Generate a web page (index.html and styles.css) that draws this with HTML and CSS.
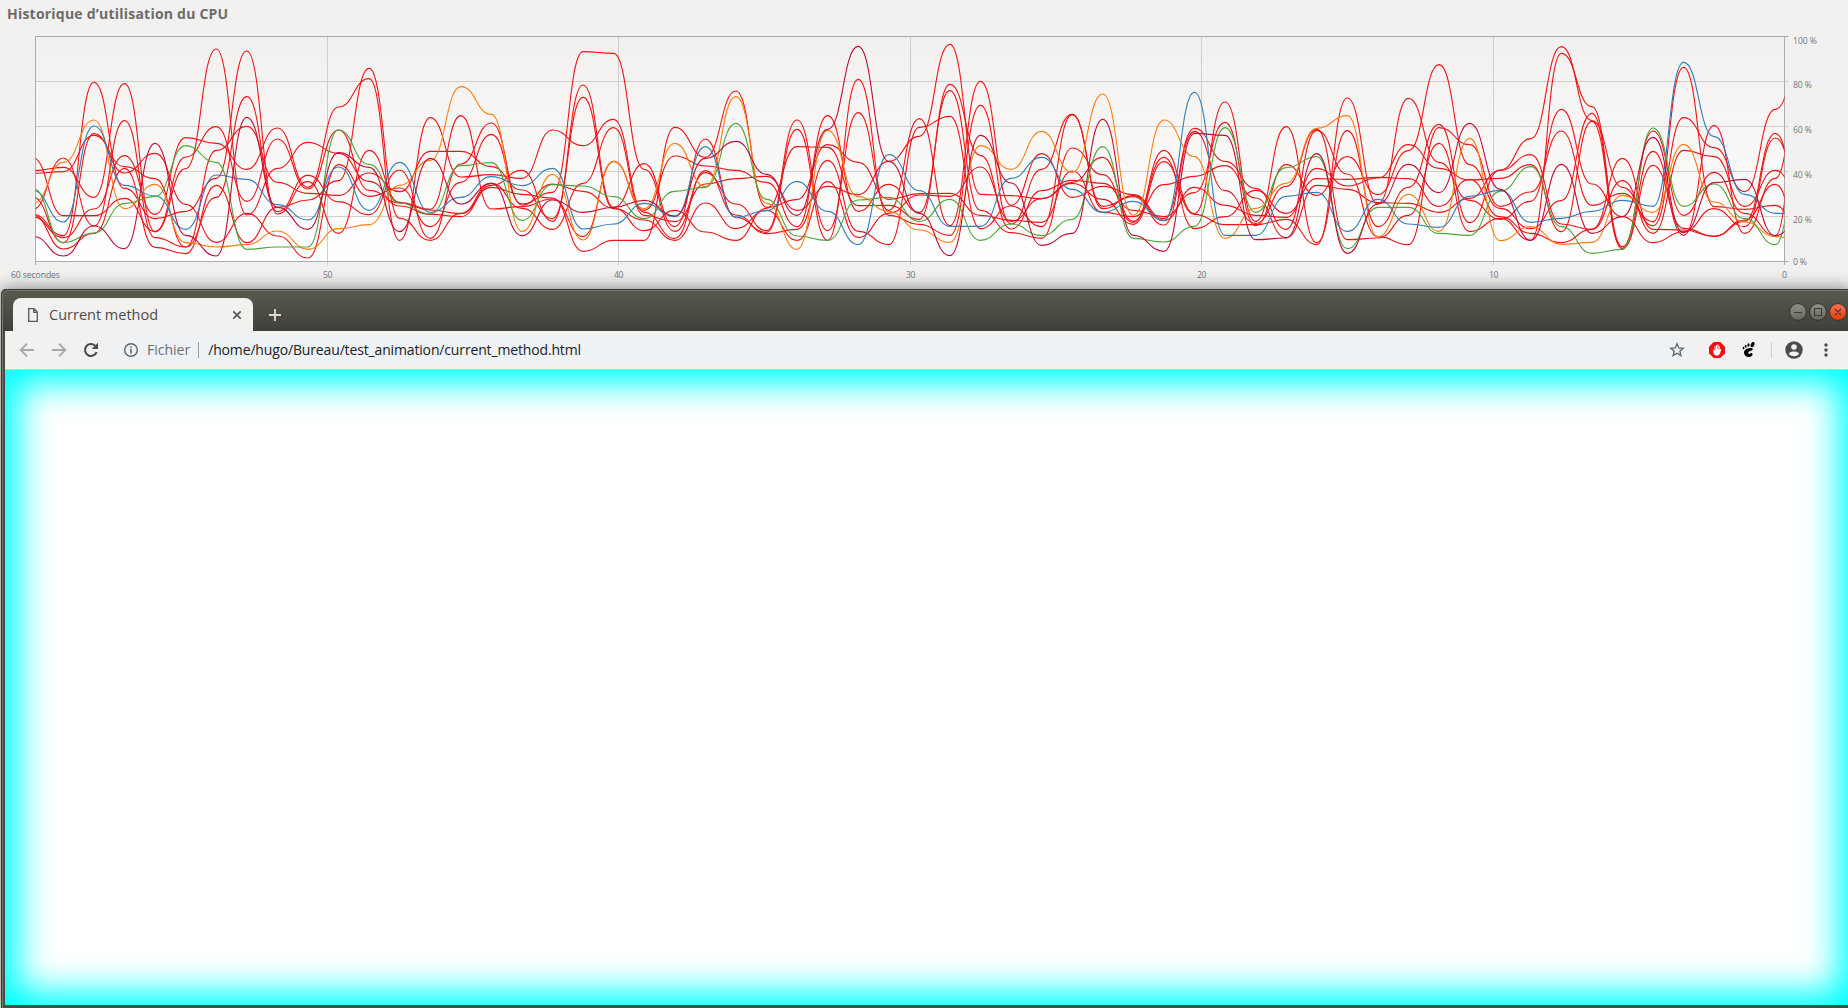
FILE: index.html
```html
<!DOCTYPE html>
<html lang="fr">
<head>
<meta charset="utf-8">
<title>Current method</title>
<link rel="stylesheet" href="styles.css">
</head>
<body>
<section class="monitor">
  <h1 class="monitor-title"><span>Historique d’utilisation du CPU</span></h1>
  <svg class="chart" viewBox="0 28 1848 261" width="1848" height="261">
    <defs>
      <linearGradient id="plot" x1="0" y1="0" x2="0" y2="1"><stop offset="0" stop-color="#f1f0ee"/><stop offset="1" stop-color="#ffffff"/></linearGradient>
      <clipPath id="clip"><rect x="35.5" y="36" width="1749" height="226"/></clipPath>
    </defs>
    <rect x="35.5" y="36.5" width="1749" height="225" fill="url(#plot)"/>
    <path class="grid" d="M35 81.5H1788.5M35 126.5H1788.5M35 171.5H1788.5M35 216.5H1788.5M327.5 37V265M618.5 37V265M910.5 37V265M1201.5 37V265M1493.5 37V265"/>
    <path class="axis" d="M35.5 265V36.5H1788.5M35.5 261.5H1788.5M1784.5 37V265"/>
    <g id="curves" clip-path="url(#clip)"></g>
    <g class="labels">
      <text x="11" y="278" textLength="49">60 secondes</text>
      <text x="323" y="278" textLength="9.5">50</text>
      <text x="614" y="278" textLength="9.5">40</text>
      <text x="906" y="278" textLength="9.5">30</text>
      <text x="1197" y="278" textLength="9.5">20</text>
      <text x="1489" y="278" textLength="9.5">10</text>
      <text x="1782" y="278">0</text>
      <text x="1793" y="44" textLength="24">100 %</text>
      <text x="1793" y="88" textLength="19">80 %</text>
      <text x="1793" y="132.5" textLength="19">60 %</text>
      <text x="1793" y="177.5" textLength="19">40 %</text>
      <text x="1793" y="222.5" textLength="19">20 %</text>
      <text x="1793" y="265" textLength="14">0 %</text>
    </g>
  </svg>
</section>
<main class="window">
  <header class="titlebar">
    <div class="tab">
      <svg class="doc" width="12" height="16" viewBox="0 0 12 16"><path d="M1.7 1.7H7L10.3 5V14.3H1.7ZM6.7 1.7V5.3H10.3" fill="none" stroke="#5a5a58" stroke-width="1.3"/></svg>
      <span class="tab-title">Current method</span>
      <svg width="10" height="10" viewBox="0 0 10 10"><path d="M1.3 1.3 8.7 8.7M8.7 1.3 1.3 8.7" stroke="#555" stroke-width="1.7"/></svg>
    </div>
    <svg class="plus" width="12" height="12" viewBox="0 0 12 12"><path d="M6 0V12M0 6H12" stroke="#dfdbd2" stroke-width="1.8"/></svg>
    <div class="controls">
      <svg width="60" height="20" viewBox="0 0 60 20">
        <defs>
          <linearGradient id="grey" x1="0" y1="0" x2="0" y2="1"><stop offset="0" stop-color="#91918a"/><stop offset="1" stop-color="#66665f"/></linearGradient>
          <linearGradient id="red" x1="0" y1="0" x2="0" y2="1"><stop offset="0" stop-color="#ff7455"/><stop offset="1" stop-color="#e73a00"/></linearGradient>
        </defs>
        <g stroke="#34342f" stroke-width="1"><circle cx="10" cy="10" r="8.4" fill="url(#grey)"/><circle cx="30" cy="10" r="8.4" fill="url(#grey)"/><circle cx="50" cy="10" r="8.4" fill="url(#red)"/></g>
        <path d="M6 10.5H14M26.5 6.5H33.5V13.5H26.5ZM47 7 53 13M53 7 47 13" fill="none" stroke="#3c3b37" stroke-width="1.1"/>
      </svg>
    </div>
  </header>
  <nav class="toolbar">
    <svg class="nav-icon" width="16" height="16" viewBox="0 0 16 16"><path d="M15 8H2M8 1.7 1.7 8 8 14.3" fill="none" stroke="#aaa8a6" stroke-width="1.9"/></svg>
    <svg class="nav-icon" width="16" height="16" viewBox="0 0 16 16"><path d="M1 8H14M8 1.7 14.3 8 8 14.3" fill="none" stroke="#aaa8a6" stroke-width="1.9"/></svg>
    <svg class="nav-icon" width="16" height="16" viewBox="0 0 16 16"><path d="M13.6 10.1A6 6 0 1 1 12.2 3.7" fill="none" stroke="#4b4b49" stroke-width="2.1"/><path d="M15 .8V7.1H8.7Z" fill="#4b4b49"/></svg>
    <div class="omnibox">
      <svg width="14" height="14" viewBox="0 0 14 14"><circle cx="7" cy="7" r="6.3" fill="none" stroke="#5f6368" stroke-width="1.4"/><path d="M7 6V10.6M7 3.3V4.8" stroke="#5f6368" stroke-width="1.6"/></svg>
      <span class="scheme">Fichier</span><i class="divider"></i><span class="url">/home/hugo/Bureau/test_animation/current_method.html</span>
      <svg class="star" width="16" height="16" viewBox="0 0 16 16"><path d="M8 1.8 9.7 6 14.2 6.3 10.8 9.2 11.9 13.6 8 11.2 4.1 13.6 5.2 9.2 1.8 6.3 6.3 6Z" fill="none" stroke="#5f6368" stroke-width="1.3"/></svg>
    </div>
    <svg class="ext" width="16" height="16" viewBox="0 0 16 16"><path d="M4.7 0H11.3L16 4.7V11.3L11.3 16H4.7L0 11.3V4.7Z" fill="#f40d12"/><path d="M4.3 7V10.5Q5 13.5 8 13.8Q10.5 13.5 11.3 10.8L12.2 7.2 11.3 6.8 10.7 8.4V4H9.8V7.3H9.4V2.6H8.4V7.3H8V3H7V7.5H6.5V4.3H5.5V9Z" fill="#fff"/></svg>
    <svg class="foot" width="14" height="16" viewBox="0 0 14 16"><ellipse cx="10.6" cy="2.6" rx="1.7" ry="2.8" transform="rotate(28 10.6 2.6)"/><ellipse cx="6.5" cy="3" rx="1.1" ry="1.7"/><ellipse cx="3.7" cy="4.3" rx=".95" ry="1.5"/><ellipse cx="1.5" cy="6.1" rx=".85" ry="1.3"/><path d="M9.7 6C5 5.7 1.5 8 2 11.3 2.4 14 5 15.3 7.6 14.9 10.5 14.4 11.3 12.2 10 11.2 8.8 10.4 8 12.3 6.8 11.8 5.4 11 6.5 9.3 8.4 9 10.4 8.6 12 6.6 9.7 6Z"/></svg>
    <i class="bar"></i>
    <svg class="avatar" width="18" height="18" viewBox="0 0 18 18"><circle cx="9" cy="9" r="8.7" fill="#4b4b4d"/><circle cx="9" cy="6" r="2.8" fill="#f2f1f0"/><path d="M3.8 13C4.2 10.9 7 10.4 9 10.4S13.8 10.9 14.2 13Q12.2 15.3 9 15.3T3.8 13Z" fill="#f2f1f0"/></svg>
    <svg class="dots" width="4" height="14" viewBox="0 0 4 14"><g fill="#4b4b49"><circle cx="2" cy="2" r="1.7"/><circle cx="2" cy="7" r="1.7"/><circle cx="2" cy="12" r="1.7"/></g></svg>
  </nav>
  <div class="page"></div>
</main>
<script src="script.js"></script>
</body>
</html>
```
FILE: styles.css
```css
* { box-sizing: border-box; }
body {
  margin: 0;
  width: 1848px;
  height: 1008px;
  overflow: hidden;
  display: flex;
  flex-direction: column;
  background: #f2f1f0;
  font-family: "Open Sans", "Noto Sans", sans-serif;
}
.monitor { height: 289px; flex: none; }
.monitor-title {
  margin: 0;
  height: 28px;
  padding-left: 7px;
  font-size: 14px;
  line-height: 28px;
  font-weight: 700;
  letter-spacing: .22px;
  color: #6d6b69;
  white-space: nowrap;
}
.chart { display: block; }
.grid { stroke: #cfcecd; stroke-width: 1; fill: none; }
.axis { stroke: #adacab; stroke-width: 1; fill: none; }
.curve { fill: none; stroke-width: 1.1; }
.labels { font-size: 8.7px; fill: #74777a; }
.window {
  flex: 1;
  min-height: 0;
  margin-left: 1px;
  margin-right: -4px;
  display: flex;
  flex-direction: column;
  background: #4b4b45;
  border-radius: 5px 0 0 0;
  border-left: 1px solid #393934;
  padding: 0 0 3px 3px;
  box-shadow: 0 0 17px rgba(0, 0, 0, .5), inset 0 1px #373732, inset 1px 2px #77776e;
}
.titlebar {
  height: 42px;
  flex: none;
  margin: 0 0 0 -2px;
  padding: 9px 0 0 10px;
  display: flex;
  border-radius: 5px 0 0 0;
  background: linear-gradient(#5a5a50, #403f3a);
  box-shadow: inset 0 1px #3a3a35, inset 0 2px #77776d;
}
.tab {
  width: 240px;
  height: 33px;
  border-radius: 8px 8px 0 0;
  background: #f2f1f0;
  display: flex;
  align-items: center;
  padding: 0 11px 0 14px;
}
.doc { margin-right: 10px; }
.tab-title { flex: 1; font-size: 14.5px; color: #4c4b4a; white-space: nowrap; }
.plus { margin: 11px 0 0 16px; }
.controls { margin: 4px 4px 0 auto; height: 20px; }
.toolbar {
  height: 39px;
  flex: none;
  background: #f2f1f0;
  border-bottom: 1px solid #d2d0ce;
  display: flex;
  align-items: center;
  padding: 0 24px 1px 14px;
}
.nav-icon { margin-right: 16px; flex: none; }
.omnibox {
  flex: 1;
  height: 28px;
  border-radius: 14px;
  background: #eef2f4;
  display: flex;
  align-items: center;
  padding: 0 10px 0 11px;
  margin-right: 14px;
  margin-left: -2px;
  font-size: 14px;
  white-space: nowrap;
}
.scheme { margin-left: 9px; color: #6a6d70; }
.divider { width: 1px; height: 16px; background: #9a9da0; margin: 0 9px 0 8px; }
.url { color: #202124; letter-spacing: -.15px; }
.star { margin-left: auto; }
.foot { margin-left: 17px; }
.bar { width: 1px; height: 16px; background: #cfcdcb; margin: 0 13px 0 15px; }
.dots { margin-left: 21px; }
.page {
  flex: 1;
  background: #fff;
  box-shadow: inset 0 0 34px 14px #00ffff;
}
```
FILE: script.js
```js
// One row per sample: four coloured cores, then the eight red ones.
// Values are distances below the top of the widget, in thirds of a pixel.
const samples = [
[649,505,511,550, 414,452,460,532,568,583,591,585],
[708,668,606,427, 587,442,455,668,414,647,653,687],
[618,639,318,300, 587,532,346,341,618,187,567,640],
[686,551,496,566, 535,191,440,459,302,505,407,445],
[370,529,528,493, 635,635,476,400,653,596,583,682],
[646,377,628,668, 446,411,681,553,681,574,353,701],
[708,427,465,681, 87,320,532,667,391,475,370,496],
[292,688,478,674, 585,544,230,580,319,93,448,668],
[562,681,554,633, 445,357,575,648,487,582,324,562],
[628,681,600,688, 367,507,466,714,520,485,502,540],
[398,330,441,626, 400,330,545,434,526,640,261,482],
[442,433,571,614, 484,511,584,529,459,391,176,145],
[635,549,427,496, 558,549,450,504,515,547,661,595],
[415,582,577,421, 583,570,655,620,394,568,293,661],
[552,437,532,200, 590,581,432,487,394,287,471,580],
[490,428,470,283, 496,502,309,343,440,567,464,490],
[647,601,497,634, 451,523,555,552,510,560,475,565],
[540,494,445,463, 604,534,492,517,596,537,330,628],
[577,498,627,660, 195,694,514,95,232,650,377,490],
[562,530,612,424, 562,661,564,100,566,424,298,323],
[541,596,550,566, 431,661,632,448,600,571,577,586],
[588,514,590,370, 620,322,571,634,661,408,655,605],
[415,502,380,500, 357,412,636,458,549,438,452,492],
[364,310,592,230, 592,213,661,552,626,451,585,476],
[463,538,572,550, 637,562,565,632,571,487,641,469],
[586,648,485,688, 328,539,380,300,661,620,628,571],
[328,661,574,331, 661,374,382,632,485,287,421,499],
[79,540,674,530, 178,427,557,278,652,574,634,524],
[424,532,404,574, 586,538,556,571,580,493,674,424],
[580,604,512,630, 613,521,598,296,525,577,322,349],
[707,538,619,667, 646,520,193,617,529,212,289,73],
[346,661,619,377, 256,586,406,184,441,571,626,523],
[489,612,475,448, 612,601,627,556,604,638,558,527],
[676,647,412,334, 448,607,512,401,536,655,620,536],
[640,598,508,457, 283,453,481,532,490,384,284,487],
[298,380,577,222, 566,577,490,499,538,464,559,412],
[646,655,544,586, 527,590,571,524,613,607,530,604],
[694,666,601,300, 602,494,590,596,425,391,615,412],
[340,619,217,410, 502,469,518,325,583,581,334,626],
[346,323,646,655, 556,437,307,424,614,246,512,590],
[659,577,646,565, 586,534,617,505,614,604,610,511],
[654,443,529,490, 592,653,434,628,598,320,499,580],
[401,410,517,325, 445,496,526,331,674,668,328,476],
[700,686,634,287, 498,508,410,462,234,332,659,478],
[552,562,538,650, 474,548,524,650,552,620,654,472],
[433,562,612,523, 374,550,392,674,235,502,586,476],
[518,640,622,634, 445,577,134,323,427,313,370,559],
[310,646,529,355, 480,535,434,374,541,608,635,478],
[508,514,511,662, 475,451,565,559,598,450,595,590],
[661,440,607,620, 434,404,626,516,544,356,661,640],
[433,620,595,673, 635,612,542,333,268,80,100,668],
[640,700,574,667, 304,628,280,556,492,302,260,628],
[590,688,541,526, 686,415,685,520,590,502,680,482],
[352,324,559,577, 436,628,394,605,668,617,333,640],
[638,559,127,373, 625,630,646,142,635,293,586,391],
[488,492,350,546, 649,649,317,560,566,383,457,410],
[478,596,523,606, 600,604,640,568,620,515,580,559],
[647,674,580,650, 493,340,475,556,354,268,647,451],
[570,264,585,664, 724,630,60,676,585,63,20,573]
];
const colors = ["#c40d35", "#4da639", "#317fb8", "#ff7f0e"];
const step = 30.57;
const left = 32.8;
const group = document.getElementById("curves");
const order = [4, 5, 6, 7, 8, 9, 10, 11, 3, 2, 1, 0];
for (const s of order) {
  let d = "";
  samples.forEach((row, i) => {
    const x = left + i * step;
    const y = 20 + row[s] / 3;
    if (i === 0) { d = `M${x} ${y}`; return; }
    const mid = x - step / 2;
    d += `C${mid} ${20 + samples[i - 1][s] / 3} ${mid} ${y} ${x} ${y}`;
  });
  const path = document.createElementNS("http://www.w3.org/2000/svg", "path");
  path.setAttribute("class", "curve");
  path.setAttribute("stroke", colors[s] || "#f01418");
  path.setAttribute("d", d);
  group.appendChild(path);
}
```
